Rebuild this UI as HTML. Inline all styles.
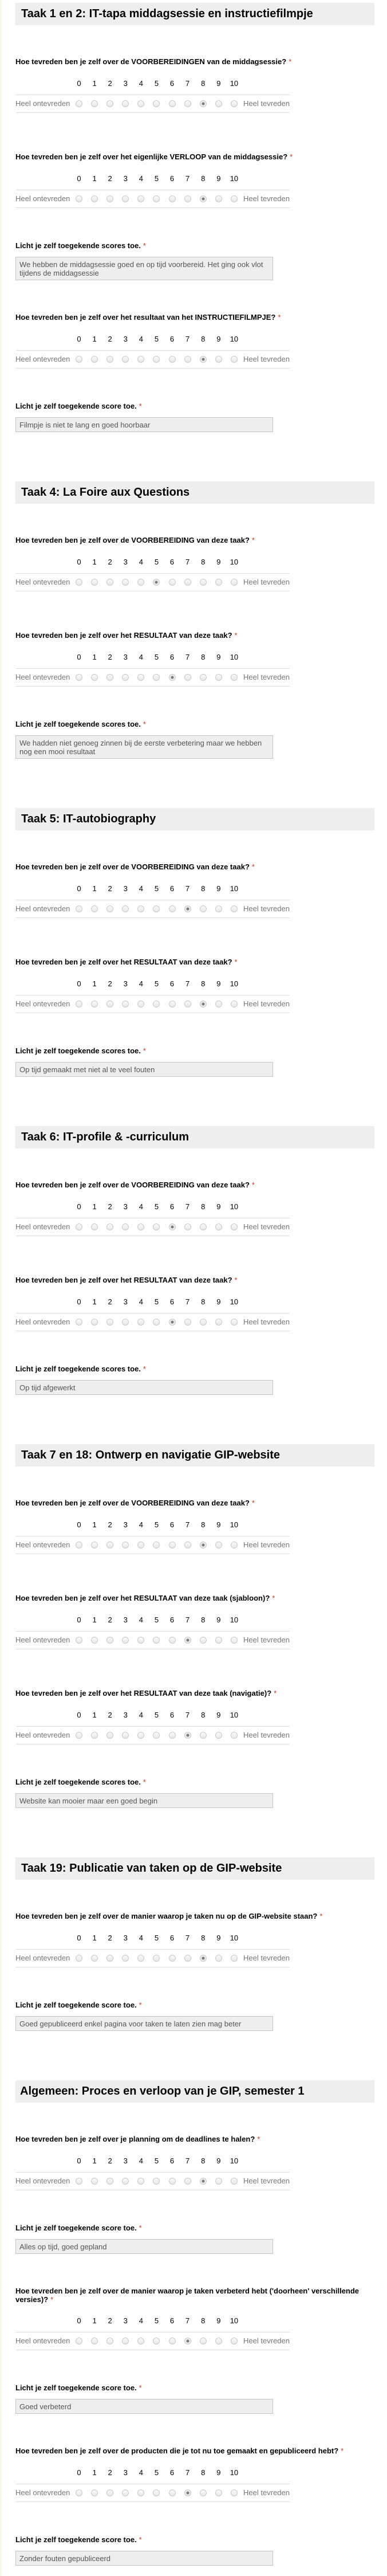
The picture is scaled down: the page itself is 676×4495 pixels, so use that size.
<!DOCTYPE html>
<html><head><meta charset="utf-8">
<style>
*{box-sizing:border-box}
html,body{margin:0;padding:0;background:#fff}
body{width:676px;height:4495px;overflow:hidden;position:relative;font-family:"Liberation Sans",Arial,sans-serif;color:#000}
.strip{position:absolute;left:0;top:0;width:3px;height:4495px;background:#f8f8e2}
.c{position:absolute;left:27px;top:0;width:627px}
.h{height:39px;line-height:39px;background:#eeeeee;font-weight:bold;font-size:20px;padding-left:10px;white-space:nowrap}
.q{font-weight:bold;font-size:13px;line-height:16px;white-space:nowrap}
.q2{line-height:15px}
.a{color:#c43b1d;font-weight:normal;margin-left:4px}
.n{margin-top:22px;height:16px;line-height:16px;font-size:13px;padding-left:97.45px;white-space:nowrap}
.n span{display:inline-block;width:27.1px;text-align:center}
.row{position:relative;margin-top:11px;width:479px;height:32px;border-top:1px solid #dcdcdc;border-bottom:1px solid #dcdcdc;font-size:13px;color:#777}
.row .l{position:absolute;left:0;top:7px;line-height:16px}
.row .rr{position:absolute;right:0;top:7px;line-height:16px}
.row .rd{position:absolute;left:97.45px;top:9px;height:13px;white-space:nowrap;font-size:0}
.row i{display:inline-block;width:27.1px;height:13px;position:relative}
.row i:after{content:"";position:absolute;left:7.5px;top:0;width:12px;height:12px;border:1px solid #c8c8c8;border-radius:50%;background:linear-gradient(#fafafa,#e8e8e8);box-sizing:border-box}
.row i.s:after{background:radial-gradient(circle,#7a7a7a 0,#7a7a7a 2.2px,#ececec 2.8px,#ececec 100%)}
.box{margin-top:11px;width:450px;border:1px solid #c4c4c4;background:#eeeeee;color:#555;font-size:13px;line-height:15px;padding:5px 6px 4px 6px;white-space:nowrap}
.m56{margin-top:56px}.m69{margin-top:69px}.m58{margin-top:58px}.m57{margin-top:57px}.m86{margin-top:86px}
</style></head><body>
<div class="strip"></div>
<div class="c">

<div class="h" style="margin-top:5px">Taak 1 en 2: IT-tapa middagsessie en instructiefilmpje</div>

<div class="m56"><div class="q">Hoe tevreden ben je zelf over de VOORBEREIDINGEN van de middagsessie?<span class="a">*</span></div>
<div class="n"><span>0</span><span>1</span><span>2</span><span>3</span><span>4</span><span>5</span><span>6</span><span>7</span><span>8</span><span>9</span><span>10</span></div>
<div class="row"><span class="l">Heel ontevreden</span><div class="rd"><i></i><i></i><i></i><i></i><i></i><i></i><i></i><i></i><i class="s"></i><i></i><i></i></div><span class="rr">Heel tevreden</span></div></div>

<div class="m69"><div class="q">Hoe tevreden ben je zelf over het eigenlijke VERLOOP van de middagsessie?<span class="a">*</span></div>
<div class="n"><span>0</span><span>1</span><span>2</span><span>3</span><span>4</span><span>5</span><span>6</span><span>7</span><span>8</span><span>9</span><span>10</span></div>
<div class="row"><span class="l">Heel ontevreden</span><div class="rd"><i></i><i></i><i></i><i></i><i></i><i></i><i></i><i></i><i class="s"></i><i></i><i></i></div><span class="rr">Heel tevreden</span></div></div>

<div class="m58"><div class="q">Licht je zelf toegekende scores toe.<span class="a">*</span></div>
<div class="box">We hebben de middagsessie goed en op tijd voorbereid. Het ging ook vlot<br>tijdens de middagsessie</div></div>

<div class="m57"><div class="q">Hoe tevreden ben je zelf over het resultaat van het INSTRUCTIEFILMPJE?<span class="a">*</span></div>
<div class="n"><span>0</span><span>1</span><span>2</span><span>3</span><span>4</span><span>5</span><span>6</span><span>7</span><span>8</span><span>9</span><span>10</span></div>
<div class="row"><span class="l">Heel ontevreden</span><div class="rd"><i></i><i></i><i></i><i></i><i></i><i></i><i></i><i></i><i class="s"></i><i></i><i></i></div><span class="rr">Heel tevreden</span></div></div>

<div class="m58"><div class="q">Licht je zelf toegekende score toe.<span class="a">*</span></div>
<div class="box">Filmpje is niet te lang en goed hoorbaar</div></div>

<div class="h m86">Taak 4: La Foire aux Questions</div>

<div class="m56"><div class="q">Hoe tevreden ben je zelf over de VOORBEREIDING van deze taak?<span class="a">*</span></div>
<div class="n"><span>0</span><span>1</span><span>2</span><span>3</span><span>4</span><span>5</span><span>6</span><span>7</span><span>8</span><span>9</span><span>10</span></div>
<div class="row"><span class="l">Heel ontevreden</span><div class="rd"><i></i><i></i><i></i><i></i><i></i><i class="s"></i><i></i><i></i><i></i><i></i><i></i></div><span class="rr">Heel tevreden</span></div></div>

<div class="m69"><div class="q">Hoe tevreden ben je zelf over het RESULTAAT van deze taak?<span class="a">*</span></div>
<div class="n"><span>0</span><span>1</span><span>2</span><span>3</span><span>4</span><span>5</span><span>6</span><span>7</span><span>8</span><span>9</span><span>10</span></div>
<div class="row"><span class="l">Heel ontevreden</span><div class="rd"><i></i><i></i><i></i><i></i><i></i><i></i><i class="s"></i><i></i><i></i><i></i><i></i></div><span class="rr">Heel tevreden</span></div></div>

<div class="m58"><div class="q">Licht je zelf toegekende scores toe.<span class="a">*</span></div>
<div class="box">We hadden niet genoeg zinnen bij de eerste verbetering maar we hebben<br>nog een mooi resultaat</div></div>

<div class="h m86">Taak 5: IT-autobiography</div>

<div class="m56"><div class="q">Hoe tevreden ben je zelf over de VOORBEREIDING van deze taak?<span class="a">*</span></div>
<div class="n"><span>0</span><span>1</span><span>2</span><span>3</span><span>4</span><span>5</span><span>6</span><span>7</span><span>8</span><span>9</span><span>10</span></div>
<div class="row"><span class="l">Heel ontevreden</span><div class="rd"><i></i><i></i><i></i><i></i><i></i><i></i><i></i><i class="s"></i><i></i><i></i><i></i></div><span class="rr">Heel tevreden</span></div></div>

<div class="m69"><div class="q">Hoe tevreden ben je zelf over het RESULTAAT van deze taak?<span class="a">*</span></div>
<div class="n"><span>0</span><span>1</span><span>2</span><span>3</span><span>4</span><span>5</span><span>6</span><span>7</span><span>8</span><span>9</span><span>10</span></div>
<div class="row"><span class="l">Heel ontevreden</span><div class="rd"><i></i><i></i><i></i><i></i><i></i><i></i><i></i><i></i><i class="s"></i><i></i><i></i></div><span class="rr">Heel tevreden</span></div></div>

<div class="m58"><div class="q">Licht je zelf toegekende scores toe.<span class="a">*</span></div>
<div class="box">Op tijd gemaakt met niet al te veel fouten</div></div>

<div class="h m86">Taak 6: IT-profile &amp; -curriculum</div>

<div class="m56"><div class="q">Hoe tevreden ben je zelf over de VOORBEREIDING van deze taak?<span class="a">*</span></div>
<div class="n"><span>0</span><span>1</span><span>2</span><span>3</span><span>4</span><span>5</span><span>6</span><span>7</span><span>8</span><span>9</span><span>10</span></div>
<div class="row"><span class="l">Heel ontevreden</span><div class="rd"><i></i><i></i><i></i><i></i><i></i><i></i><i class="s"></i><i></i><i></i><i></i><i></i></div><span class="rr">Heel tevreden</span></div></div>

<div class="m69"><div class="q">Hoe tevreden ben je zelf over het RESULTAAT van deze taak?<span class="a">*</span></div>
<div class="n"><span>0</span><span>1</span><span>2</span><span>3</span><span>4</span><span>5</span><span>6</span><span>7</span><span>8</span><span>9</span><span>10</span></div>
<div class="row"><span class="l">Heel ontevreden</span><div class="rd"><i></i><i></i><i></i><i></i><i></i><i></i><i class="s"></i><i></i><i></i><i></i><i></i></div><span class="rr">Heel tevreden</span></div></div>

<div class="m58"><div class="q">Licht je zelf toegekende scores toe.<span class="a">*</span></div>
<div class="box">Op tijd afgewerkt</div></div>

<div class="h m86">Taak 7 en 18: Ontwerp en navigatie GIP-website</div>

<div class="m56"><div class="q">Hoe tevreden ben je zelf over de VOORBEREIDING van deze taak?<span class="a">*</span></div>
<div class="n"><span>0</span><span>1</span><span>2</span><span>3</span><span>4</span><span>5</span><span>6</span><span>7</span><span>8</span><span>9</span><span>10</span></div>
<div class="row"><span class="l">Heel ontevreden</span><div class="rd"><i></i><i></i><i></i><i></i><i></i><i></i><i></i><i></i><i class="s"></i><i></i><i></i></div><span class="rr">Heel tevreden</span></div></div>

<div class="m69"><div class="q">Hoe tevreden ben je zelf over het RESULTAAT van deze taak (sjabloon)?<span class="a">*</span></div>
<div class="n"><span>0</span><span>1</span><span>2</span><span>3</span><span>4</span><span>5</span><span>6</span><span>7</span><span>8</span><span>9</span><span>10</span></div>
<div class="row"><span class="l">Heel ontevreden</span><div class="rd"><i></i><i></i><i></i><i></i><i></i><i></i><i></i><i class="s"></i><i></i><i></i><i></i></div><span class="rr">Heel tevreden</span></div></div>

<div class="m69"><div class="q">Hoe tevreden ben je zelf over het RESULTAAT van deze taak (navigatie)?<span class="a">*</span></div>
<div class="n"><span>0</span><span>1</span><span>2</span><span>3</span><span>4</span><span>5</span><span>6</span><span>7</span><span>8</span><span>9</span><span>10</span></div>
<div class="row"><span class="l">Heel ontevreden</span><div class="rd"><i></i><i></i><i></i><i></i><i></i><i></i><i></i><i class="s"></i><i></i><i></i><i></i></div><span class="rr">Heel tevreden</span></div></div>

<div class="m58"><div class="q">Licht je zelf toegekende scores toe.<span class="a">*</span></div>
<div class="box">Website kan mooier maar een goed begin</div></div>

<div class="h m86">Taak 19: Publicatie van taken op de GIP-website</div>

<div class="m56"><div class="q">Hoe tevreden ben je zelf over de manier waarop je taken nu op de GIP-website staan?<span class="a">*</span></div>
<div class="n"><span>0</span><span>1</span><span>2</span><span>3</span><span>4</span><span>5</span><span>6</span><span>7</span><span>8</span><span>9</span><span>10</span></div>
<div class="row"><span class="l">Heel ontevreden</span><div class="rd"><i></i><i></i><i></i><i></i><i></i><i></i><i></i><i></i><i class="s"></i><i></i><i></i></div><span class="rr">Heel tevreden</span></div></div>

<div class="m58"><div class="q">Licht je zelf toegekende score toe.<span class="a">*</span></div>
<div class="box">Goed gepubliceerd enkel pagina voor taken te laten zien mag beter</div></div>

<div class="h m86" style="padding-left:8px">Algemeen: Proces en verloop van je GIP, semester 1</div>

<div class="m56"><div class="q">Hoe tevreden ben je zelf over je planning om de deadlines te halen?<span class="a">*</span></div>
<div class="n"><span>0</span><span>1</span><span>2</span><span>3</span><span>4</span><span>5</span><span>6</span><span>7</span><span>8</span><span>9</span><span>10</span></div>
<div class="row"><span class="l">Heel ontevreden</span><div class="rd"><i></i><i></i><i></i><i></i><i></i><i></i><i></i><i></i><i class="s"></i><i></i><i></i></div><span class="rr">Heel tevreden</span></div></div>

<div class="m58"><div class="q">Licht je zelf toegekende score toe.<span class="a">*</span></div>
<div class="box">Alles op tijd, goed gepland</div></div>

<div class="m57"><div class="q q2" style="margin-top:1px">Hoe tevreden ben je zelf over de manier waarop je taken verbeterd hebt ('doorheen' verschillende<br>versies)?<span class="a">*</span></div>
<div class="n" style="margin-top:22px"><span>0</span><span>1</span><span>2</span><span>3</span><span>4</span><span>5</span><span>6</span><span>7</span><span>8</span><span>9</span><span>10</span></div>
<div class="row"><span class="l">Heel ontevreden</span><div class="rd"><i></i><i></i><i></i><i></i><i></i><i></i><i></i><i class="s"></i><i></i><i></i><i></i></div><span class="rr">Heel tevreden</span></div></div>

<div class="m58"><div class="q">Licht je zelf toegekende score toe.<span class="a">*</span></div>
<div class="box">Goed verbeterd</div></div>

<div class="m57"><div class="q">Hoe tevreden ben je zelf over de producten die je tot nu toe gemaakt en gepubliceerd hebt?<span class="a">*</span></div>
<div class="n"><span>0</span><span>1</span><span>2</span><span>3</span><span>4</span><span>5</span><span>6</span><span>7</span><span>8</span><span>9</span><span>10</span></div>
<div class="row"><span class="l">Heel ontevreden</span><div class="rd"><i></i><i></i><i></i><i></i><i></i><i></i><i></i><i class="s"></i><i></i><i></i><i></i></div><span class="rr">Heel tevreden</span></div></div>

<div class="m58"><div class="q">Licht je zelf toegekende score toe.<span class="a">*</span></div>
<div class="box">Zonder fouten gepubliceerd</div></div>

</div>
</body></html>
